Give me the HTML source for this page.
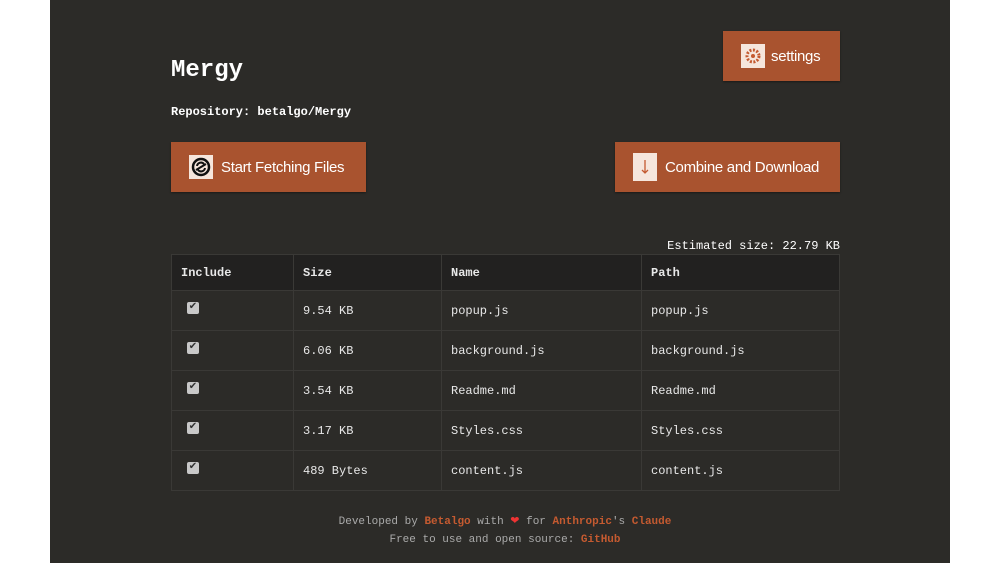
<!DOCTYPE html>
<html><head><style>
body{margin:0;width:1000px;height:563px;background:#fff;overflow:hidden;font-family:"Liberation Mono",monospace;}
.main{position:absolute;left:50px;top:0;width:900px;height:563px;background:#2c2b28;}
.a{position:absolute;}
.btn{position:absolute;background:#a9532f;color:#fff;font-family:"Liberation Sans",sans-serif;font-size:15px;letter-spacing:-0.3px;display:flex;align-items:center;box-shadow:0 1px 2px #0006;}
.ic{width:24px;height:24px;background:#f6e6dc;margin:0 8px 0 18px;display:flex;align-items:center;justify-content:center;}
table{position:absolute;left:171px;top:254px;width:669px;border-collapse:collapse;font-size:12px;color:#e8e8e8;}
td,th{border:1px solid #3a3936;text-align:left;padding:0 9px;}
th{background:#222120;height:35px;font-weight:bold;}
td{height:39px;}
.cb{display:inline-block;width:12px;height:12px;background:#c8c8c8;border-radius:2px;color:#333;font-size:10px;line-height:12px;text-align:center;margin-left:6px;vertical-align:middle;position:relative;top:-2px;}
.o{color:#c45a30;font-weight:bold;}
</style></head><body>
<div class="main"></div>
<div class="a" style="left:171px;top:57px;color:#fff;font-size:24px;font-weight:bold;">Mergy</div>
<div class="a" style="left:171px;top:105px;color:#fff;font-size:12px;font-weight:bold;">Repository: betalgo/Mergy</div>
<div class="btn" style="left:723px;top:31px;width:117px;height:50px;"><div class="ic" style="margin-left:18px;margin-right:6px"><svg width="20" height="20" viewBox="0 0 20 20"><circle cx="10" cy="10" r="6" fill="none" stroke="#c45a30" stroke-width="3" stroke-dasharray="2 1.5"/><circle cx="10" cy="10" r="2" fill="#c45a30"/></svg></div>settings</div>
<div class="btn" style="left:171px;top:142px;width:195px;height:50px;"><div class="ic"><svg width="20" height="20" viewBox="0 0 20 20"><circle cx="10" cy="10" r="8" fill="none" stroke="#111" stroke-width="2.5"/><path d="M6 9 A4 4 0 0 1 13 7 M14 11 A4 4 0 0 1 7 13 M5 13 L15 7" stroke="#111" stroke-width="2" fill="none"/></svg></div>Start Fetching Files</div>
<div class="btn" style="left:615px;top:142px;width:225px;height:50px;"><div class="ic" style="height:28px"><svg width="14" height="20" viewBox="0 0 14 20"><path d="M7 3V16M4 13L7 16L10 13" stroke="#c45a30" stroke-width="1.3" fill="none"/></svg></div>Combine and Download</div>
<div class="a" style="right:160px;top:239px;color:#fff;font-size:12px;">Estimated size: 22.79 KB</div>
<table>
<tr><th style="width:103px">Include</th><th style="width:129px">Size</th><th style="width:181px">Name</th><th>Path</th></tr>
<tr><td><span class="cb">✔</span></td><td>9.54 KB</td><td>popup.js</td><td>popup.js</td></tr>
<tr><td><span class="cb">✔</span></td><td>6.06 KB</td><td>background.js</td><td>background.js</td></tr>
<tr><td><span class="cb">✔</span></td><td>3.54 KB</td><td>Readme.md</td><td>Readme.md</td></tr>
<tr><td><span class="cb">✔</span></td><td>3.17 KB</td><td>Styles.css</td><td>Styles.css</td></tr>
<tr><td><span class="cb">✔</span></td><td>489 Bytes</td><td>content.js</td><td>content.js</td></tr>
</table>
<div class="a" style="left:0;width:1010px;top:513px;text-align:center;color:#aaa;font-size:11px;line-height:18px;">Developed by <span class="o">Betalgo</span> with <span style="color:#e33">❤</span> for <span class="o">Anthropic</span>'s <span class="o">Claude</span><br>Free to use and open source: <span class="o">GitHub</span></div>
</body></html>
